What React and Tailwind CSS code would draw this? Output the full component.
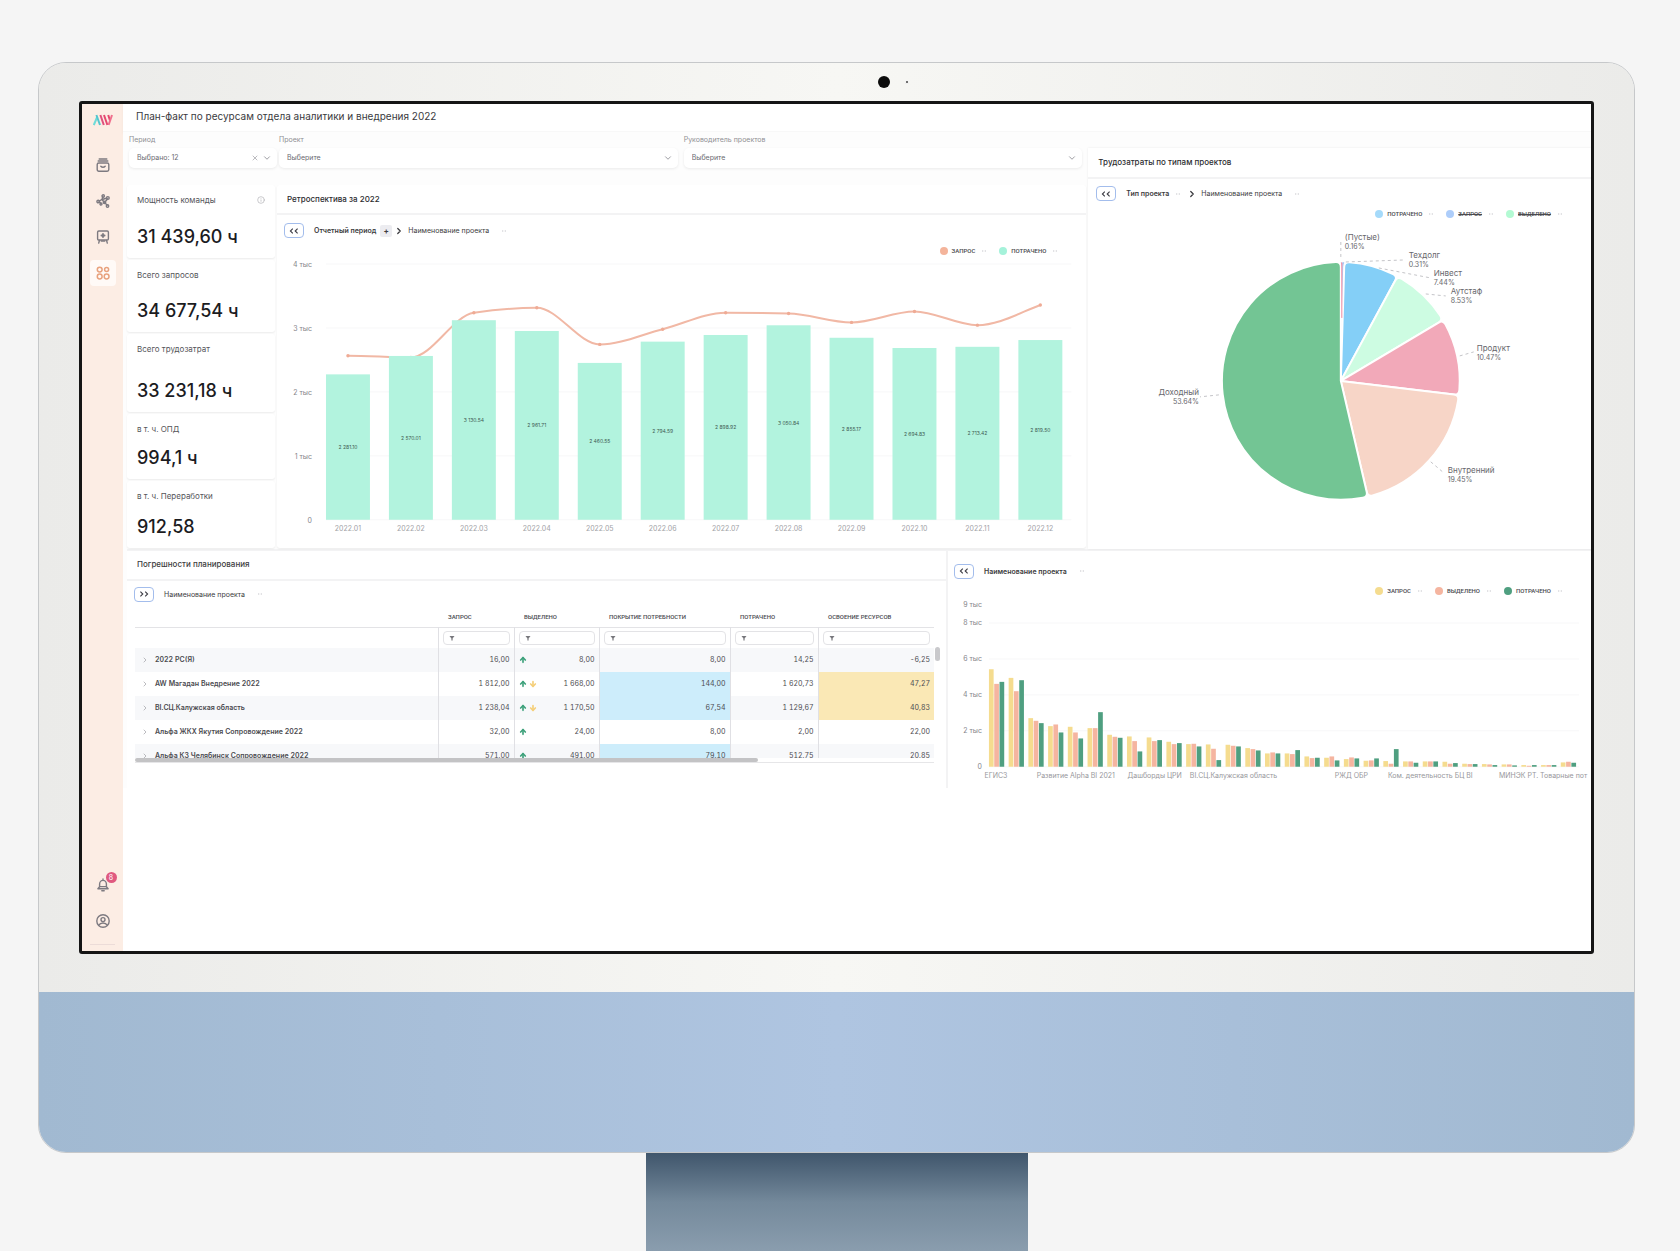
import { ChevronDown, ChevronRight, Info, X, ArrowUp, ArrowDown } from "lucide-react";

const months = [
  { label: "2022.01", spent: 2281.1, request: 2574 },
  { label: "2022.02", spent: 2570.01, request: 2547 },
  { label: "2022.03", spent: 3130.54, request: 3248 },
  { label: "2022.04", spent: 2961.71, request: 3326 },
  { label: "2022.05", spent: 2460.55, request: 2751 },
  { label: "2022.06", spent: 2794.59, request: 2990 },
  { label: "2022.07", spent: 2898.92, request: 3248 },
  { label: "2022.08", spent: 3050.84, request: 3237 },
  { label: "2022.09", spent: 2855.17, request: 3096 },
  { label: "2022.10", spent: 2694.83, request: 3268 },
  { label: "2022.11", spent: 2713.42, request: 3053 },
  { label: "2022.12", spent: 2819.5, request: 3370 },
];

const kpis = [
  { label: "Мощность команды", value: "31 439,60 ч", height: "h-[73px]", info: true },
  { label: "Всего запросов", value: "34 677,54 ч", height: "h-[72px]" },
  { label: "Всего трудозатрат", value: "33 231,18 ч", height: "h-[78px]" },
  { label: "в т. ч. ОПД", value: "994,1 ч", height: "h-[65px]" },
  { label: "в т. ч. Переработки", value: "912,58", height: "h-[67px]" },
];

const slices = [
  { name: "(Пустые)", share: 0.16, color: "#f0899f", x: 257, y: 15, line: "M253 19V37" },
  { name: "Техдолг", share: 0.31, color: "#a9c6f5", x: 321, y: 33, line: "M258 39L316 37" },
  { name: "Инвест", share: 7.44, color: "#84cff7", x: 346, y: 51, line: "M291 45L343 55" },
  { name: "Аутстаф", share: 8.53, color: "#cdfce2", x: 363, y: 69, line: "M338 71L358 73" },
  { name: "Продукт", share: 10.47, color: "#f2a9b9", x: 389, y: 126, line: "M372 133L386 129" },
  { name: "Внутренний", share: 19.45, color: "#f7d5c7", x: 360, y: 248, line: "M343 239L356 250" },
  { name: "Доходный", share: 53.64, color: "#73c594", x: 111, y: 170, line: "M131 172L112 174", end: true },
];

// request, allocated, spent
const projects = [
  [5456, 4637, 4749], [4972, 4227, 4842], [2719, 2570, 2440], [2272, 2365, 1918], [2235, 1918, 1583],
  [2160, 2160, 3054], [1788, 1676, 1620], [1695, 1434, 857], [1639, 1434, 1490], [1397, 1266, 1322],
  [1266, 1285, 1136], [1248, 1006, 372], [1229, 1173, 1136], [1043, 987, 912], [745, 801, 745],
  [745, 708, 931], [577, 484, 503], [503, 577, 354], [428, 521, 466], [335, 354, 466],
  [317, 168, 987], [298, 298, 223], [298, 298, 298], [279, 168, 205], [168, 149, 149],
  [149, 130, 93], [130, 130, 75], [93, 56, 93], [93, 93, 93], [242, 279, 223],
];

const projectColors = ["#f5dc8f", "#f5b5a0", "#4f9f80"];

const projectLabels = [
  { text: "ЕГИСЗ", x: 48 },
  { text: "Развитие Alpha BI 2021", x: 128 },
  { text: "Дашборды ЦРИ", x: 207 },
  { text: "BI.СЦ.Калужская область", x: 286 },
  { text: "РЖД ОБР", x: 404 },
  { text: "Ком. деятельность БЦ BI", x: 483 },
  { text: "МИНЭК РТ. Товарные пот", x: 596 },
];

const columns = ["ЗАПРОС", "ВЫДЕЛЕНО", "ПОКРЫТИЕ ПОТРЕБНОСТИ", "ПОТРАЧЕНО", "ОСВОЕНИЕ РЕСУРСОВ"];

const rows = [
  { name: "2022 РС(Я)", cells: ["16,00", "8,00", "8,00", "14,25", "-6,25"] },
  { name: "AW Магадан Внедрение 2022", cells: ["1 812,00", "1 668,00", "144,00", "1 620,73", "47,27"], down: true, cover: true, usage: true },
  { name: "BI.СЦ.Калужская область", cells: ["1 238,04", "1 170,50", "67,54", "1 129,67", "40,83"], down: true, cover: true, usage: true },
  { name: "Альфа ЖКХ Якутия Сопровождение 2022", cells: ["32,00", "24,00", "8,00", "2,00", "22,00"] },
  { name: "Альфа КЗ Челябинск Сопровождение 2022", cells: ["571,00", "491,00", "79,10", "512,75", "20,85"], cover: true },
];

function formatHours(value) {
  const [whole, fraction] = value.toFixed(2).split(".");
  return `${whole.slice(0, -3)} ${whole.slice(-3)}.${fraction}`;
}

// Monotone cubic curve through the points
function smoothPath(points) {
  const slopes = points.map((p, i) => {
    const prev = points[i - 1];
    const next = points[i + 1];
    if (!prev || !next) return 0;
    const a = (p.y - prev.y) / (p.x - prev.x);
    const b = (next.y - p.y) / (next.x - p.x);
    return a * b <= 0 ? 0 : (2 * a * b) / (a + b);
  });
  slopes[slopes.length - 1] = -0.38;

  return points
    .map((p, i) => {
      if (i === 0) return `M${p.x} ${p.y}`;
      const prev = points[i - 1];
      const dx = (p.x - prev.x) / 3;
      return `C${prev.x + dx} ${prev.y + slopes[i - 1] * dx} ${p.x - dx} ${p.y - slopes[i] * dx} ${p.x} ${p.y}`;
    })
    .join("");
}

// Pie sector with softened outer corners
function slicePath(cx, cy, r, from, to) {
  const at = (angle, radius) => `${cx + radius * Math.sin(angle)} ${cy - radius * Math.cos(angle)}`;
  const corner = Math.min(5, ((to - from) * r) / 3);
  const turn = corner / r;
  const large = to - from > Math.PI ? 1 : 0;
  return [
    `M${cx} ${cy}`,
    `L${at(from, r - corner)}`,
    `Q${at(from, r)} ${at(from + turn, r)}`,
    `A${r} ${r} 0 ${large} 1 ${at(to - turn, r)}`,
    `Q${at(to, r)} ${at(to, r - corner)}`,
    "Z",
  ].join("");
}

function Logo() {
  return (
    <svg viewBox="0 0 20 12" className="h-3 w-5" fill="none" strokeWidth="2">
      <path d="M.8 11L4.4 2.5" stroke="#6fdcd8" />
      <path d="M3.4 1L7 11" stroke="#56c6cf" />
      <path d="M7.4 1L10.8 11" stroke="#e0507c" />
      <path d="M11 1L14.4 11M15.2 1L17 6.5" stroke="#e6486f" />
      <path d="M19 1L15.6 11" stroke="#f0708d" />
    </svg>
  );
}

function ArchiveIcon() {
  return (
    <svg viewBox="0 0 14 14" className="size-3.5" fill="none" stroke="currentColor" strokeWidth="1.4" strokeLinecap="round">
      <path d="M3.2 1h7.6M2.2 3h9.6" />
      <rect x="1.2" y="5" width="11.6" height="8.2" rx="1.6" />
      <path d="M4.8 8.3c1.2 1.3 3.2 1.3 4.4 0" />
    </svg>
  );
}

function NodesIcon() {
  return (
    <svg viewBox="0 0 14 14" className="size-3.5" fill="none" stroke="currentColor" strokeWidth="1.4">
      <path d="M2.5 7.5L6 5.5L11.5 4M6 5.5L7 2M6 5.5L8.5 8.5M3 7.5L5 9.5M8.5 8.5L11.5 11.5M8.5 8.5L12 4.5" />
      <circle cx="2.2" cy="7.5" r="1.3" />
      <circle cx="7.2" cy="2" r="1.2" />
      <circle cx="11.8" cy="4" r="1.4" />
      <circle cx="5" cy="10" r="1" />
      <circle cx="8.5" cy="8.3" r="1.2" />
      <circle cx="11.5" cy="12" r="1.2" />
    </svg>
  );
}

function BoardIcon() {
  return (
    <svg viewBox="0 0 14 14" className="size-3.5" fill="none" stroke="currentColor" strokeWidth="1.4" strokeLinecap="round">
      <rect x="1.6" y="1" width="10.8" height="9" rx="1.2" />
      <path d="M3.4 10.5l-.7 2.6M10.6 10.5l.7 2.6M5.2 11h3.6" />
      <path d="M7 3.9v3.2M5.4 5.5h3.2" strokeWidth="1.8" />
    </svg>
  );
}

function WidgetsIcon() {
  return (
    <svg viewBox="0 0 14 14" className="size-3.5" fill="none" stroke="currentColor" strokeWidth="1.5">
      <circle cx="3.7" cy="3.6" r="2.4" />
      <circle cx="10.6" cy="3.6" r="2" />
      <circle cx="3.7" cy="10.5" r="2.4" />
      <circle cx="10.6" cy="10.5" r="2.4" />
    </svg>
  );
}

function BellIcon() {
  return (
    <svg viewBox="0 0 14 14" className="size-3.5" fill="none" stroke="currentColor" strokeWidth="1.4" strokeLinecap="round" strokeLinejoin="round">
      <path d="M7 1v1.2M3.6 8.8V6a3.4 3.6 0 0 1 6.8 0v2.8l1.7 2H1.9z" />
      <path d="M3.6 8.6h6.8M5.8 12.8h2.4" />
    </svg>
  );
}

function ProfileIcon() {
  return (
    <svg viewBox="0 0 14 14" className="size-3.5" fill="none" stroke="currentColor" strokeWidth="1.4">
      <circle cx="7" cy="7" r="6.2" />
      <circle cx="7" cy="5.6" r="2" />
      <path d="M2.8 11.2c.8-1.4 2.2-2.2 4.2-2.2s3.4.8 4.2 2.2" />
    </svg>
  );
}

function Sidebar() {
  return (
    <nav className="flex w-[41px] shrink-0 flex-col items-center bg-[#fcede4] pt-2.5 pb-1.5 text-[#7d7a80]">
      <Logo />
      <div className="mt-[26px] flex flex-col items-center gap-2.5">
        <button aria-label="Архив" className="flex size-[26px] items-center justify-center"><ArchiveIcon /></button>
        <button aria-label="Модели" className="flex size-[26px] items-center justify-center"><NodesIcon /></button>
        <button aria-label="Доски" className="flex size-[26px] items-center justify-center"><BoardIcon /></button>
        <button aria-label="Виджеты" className="flex size-[26px] items-center justify-center rounded-[4px] bg-[#fffaf7] text-[#e8a27e]"><WidgetsIcon /></button>
      </div>
      <button aria-label="Уведомления" className="relative mt-auto">
        <BellIcon />
        <span className="absolute -top-1.5 left-2.5 flex size-[11px] items-center justify-center rounded-full bg-[#e0597f] text-[7px] leading-none text-white">8</span>
      </button>
      <button aria-label="Профиль" className="mt-[22px]"><ProfileIcon /></button>
      <div className="mt-4 h-px w-[25px] bg-[#ecdcd8]" />
    </nav>
  );
}

function Filter({ id, label, value, className, clearable }) {
  return (
    <div className={className}>
      <label htmlFor={id} className="block h-4 text-[7px] leading-4 text-[#8f8f93]">{label}</label>
      <div className="relative">
        <select id={id} className="block h-5 w-full appearance-none rounded-[5px] bg-white pl-2 text-[7px] text-[#6a6a70] shadow-[0_1px_3px_rgba(0,0,0,0.08)]">
          <option>{value}</option>
        </select>
        {clearable && (
          <button aria-label="Очистить" className="absolute top-1.5 right-[18px]"><X className="size-2 text-[#9a9aa0]" /></button>
        )}
        <ChevronDown className="pointer-events-none absolute top-[5px] right-[5px] size-2.5 text-[#8a8a90]" />
      </div>
    </div>
  );
}

function ToggleButton({ forward }) {
  return (
    <button aria-label={forward ? "Развернуть" : "Свернуть"} className="flex h-[15px] w-5 items-center justify-center rounded-[4px] border border-[#a3bdec] bg-white text-[#3c3c44]">
      <svg viewBox="0 0 10 6" className={forward ? "h-1.5 w-2.5 rotate-180" : "h-1.5 w-2.5"} fill="none" stroke="currentColor" strokeWidth="1.1">
        <path d="M3.8 .6L1.4 3l2.4 2.4M8.6 .6L6.2 3l2.4 2.4" />
      </svg>
    </button>
  );
}

function Dots() {
  return (
    <svg viewBox="0 0 6 2" className="h-0.5 w-1.5" fill="#c6c6cb">
      <rect x="1" y="0.5" width="1.3" height="1" />
      <rect x="3.7" y="0.5" width="1.3" height="1" />
    </svg>
  );
}

function Legend({ items }) {
  return (
    <ul className="flex h-[15px] items-center justify-end gap-3 pr-7 font-['Roboto','Noto_Sans',sans-serif] text-[6px] leading-none font-medium text-[#4a4a4e]">
      {items.map((item) => (
        <li key={item.name} className="flex items-center gap-1">
          <svg viewBox="0 0 8 8" className="size-2"><circle cx="4" cy="4" r="4" fill={item.color} /></svg>
          <span className={item.off ? "mr-0.5 line-through" : "mr-0.5"}>{item.name}</span>
          <Dots />
        </li>
      ))}
    </ul>
  );
}

function RetroChart() {
  const zero = 262;
  const scale = 0.0638;
  const points = months.map((m, i) => ({ x: 71 + i * 63, y: zero - m.request * scale }));

  return (
    <svg viewBox="0 0 810 290" className="block w-full" role="img" aria-label="Ретроспектива за 2022">
      {[0, 1, 2, 3, 4].map((tick) => (
        <g key={tick}>
          <path d={`M49 ${zero - tick * 64}H795`} stroke="#f7f7f8" />
          <text x="35" y={zero - tick * 64 + 3} fontSize="7" textAnchor="end" fill="#85858a">
            {tick ? `${tick} тыс` : "0"}
          </text>
        </g>
      ))}
      <path d={smoothPath(points)} fill="none" stroke="#f1b8a5" strokeWidth="2" />
      {points.map((p) => (
        <circle key={p.x} cx={p.x} cy={p.y} r="1.7" fill="#efab95" />
      ))}
      {months.map((m, i) => (
        <g key={m.label} textAnchor="middle">
          <rect x={49 + i * 63} y={zero - m.spent * scale} width="44" height={m.spent * scale} fill="#b2f3de" />
          <text x={71 + i * 63} y={zero - (m.spent * scale) / 2 + 2} fontSize="5" fill="#3d5a52">{formatHours(m.spent)}</text>
          <text x={71 + i * 63} y="273" fontSize="7" fill="#a2a2a6">{m.label}</text>
        </g>
      ))}
    </svg>
  );
}

function PieChart() {
  const total = slices.reduce((sum, s) => sum + s.share, 0);
  let angle = 0;
  const arcs = slices.map((s) => {
    const from = angle;
    angle += (s.share / total) * Math.PI * 2;
    return { ...s, from, to: angle };
  });

  return (
    <svg viewBox="0 0 503 326" className="block w-full" role="img" aria-label="Трудозатраты по типам проектов">
      {arcs.map((s) => (
        <path key={s.name} d={slicePath(253, 158, 119, s.from, s.to)} fill={s.color} stroke="#fff" strokeWidth={s.share < 1 ? 0.3 : 2} />
      ))}
      {/* the empty group is thinner than its border, so it gets its own stroke */}
      <path d="M254 40V95" stroke="#f0899f" />
      {arcs.map((s) => (
        <g key={s.name} textAnchor={s.end ? "end" : "start"} fill="#67676c">
          <path d={s.line} stroke="#c4c4c8" strokeDasharray="3 3" fill="none" />
          <text x={s.x} y={s.y + 2} fontSize="8">{s.name}</text>
          <text x={s.x} y={s.y + 11} fontSize="7">{s.share}%</text>
        </g>
      ))}
    </svg>
  );
}

function ProjectsChart() {
  const zero = 168;
  const scale = 0.0179;

  return (
    <svg viewBox="0 0 644 190" className="block w-full" role="img" aria-label="Наименование проекта">
      {[0, 2, 4, 6, 8, 9].map((tick) => (
        <g key={tick}>
          <path d={`M41 ${zero - tick * 18}H632`} stroke={tick === 9 ? "none" : "#f7f7f8"} />
          <text x="34" y={zero - tick * 18 + 2} fontSize="7" textAnchor="end" fill="#85858a">
            {tick ? `${tick} тыс` : "0"}
          </text>
        </g>
      ))}
      {projects.map((values, i) =>
        values.map((value, k) => (
          <rect key={`${i}-${k}`} x={41 + i * 19.75 + k * 5.3} y={zero - value * scale} width="4.7" height={value * scale} fill={projectColors[k]} />
        ))
      )}
      {projectLabels.map((label) => (
        <text key={label.text} x={label.x} y="179" fontSize="7" textAnchor="middle" fill="#97979c">{label.text}</text>
      ))}
    </svg>
  );
}

function PlanningTable() {
  return (
    <div className="relative mt-1 mr-3 ml-2">
      <div className="h-[152px] overflow-hidden">
        <table className="w-full table-fixed border-collapse text-[7px] leading-none text-[#4b4b50]">
          <colgroup>
            <col className="w-[303px]" />
            <col className="w-[76px]" />
            <col className="w-[85px]" />
            <col className="w-[131px]" />
            <col className="w-[88px]" />
            <col className="w-[116px]" />
          </colgroup>
          <thead>
            <tr className="h-[22px] border-b border-[#e3e3e6]">
              <th aria-label="Проект" />
              {columns.map((name) => (
                <th key={name} scope="col" className="pl-2.5 text-left font-['Roboto','Noto_Sans',sans-serif] text-[6px] font-medium whitespace-nowrap">{name}</th>
              ))}
            </tr>
            <tr className="h-5">
              <td />
              {columns.map((name) => (
                <td key={name} className="border-l border-[#e0e0e4] px-1 py-0">
                  <div className="relative">
                    <input aria-label={`Фильтр: ${name}`} className="block h-3.5 w-full rounded-[4px] border border-[#e3e3e6] bg-white pl-4" />
                    <svg viewBox="0 0 6 6" className="pointer-events-none absolute top-1 left-1.5 size-1.5" fill="#77777c"><path d="M.5 1h5L3.6 3.4V5.5H2.4V3.4z" /></svg>
                  </div>
                </td>
              ))}
            </tr>
          </thead>
          <tbody className="tabular-nums">
            {rows.map((row, i) => (
              <tr key={row.name} className={i % 2 ? "h-6 bg-white" : "h-6 bg-[#f7f8fa]"}>
                <th scope="row" className="p-0 text-left font-semibold whitespace-nowrap">
                  <span className="flex items-center gap-1.5 pl-1.5">
                    <ChevronRight className="size-2 text-[#9a9aa0]" />
                    {row.name}
                  </span>
                </th>
                {row.cells.map((cell, k) => (
                  <td
                    key={k}
                    className={
                      k === 2 && row.cover
                        ? "border-l border-[#e0e0e4] bg-[#cdedfb] px-1 text-right"
                        : k === 4 && row.usage
                          ? "border-l border-[#e0e0e4] bg-[#fae8b5] px-1 text-right"
                          : "border-l border-[#e0e0e4] px-1 text-right"
                    }
                  >
                    {k === 1 ? (
                      <span className="flex items-center">
                        <ArrowUp className="size-2 text-[#3fa27c]" strokeWidth={5} />
                        {row.down && <ArrowDown className="ml-0.5 size-2 text-[#f5cf7a]" strokeWidth={5} />}
                        <span className="ml-auto">{cell}</span>
                      </span>
                    ) : (
                      cell
                    )}
                  </td>
                ))}
              </tr>
            ))}
          </tbody>
        </table>
      </div>
      <div className="h-[5px] border-b border-[#e6e6e8]">
        <div className="h-1 w-[78%] rounded-full bg-[#c3c3c5]" />
      </div>
      <div className="absolute top-[41px] -right-1.5 h-3.5 w-[5px] rounded-full bg-[#c9c9cc]" />
    </div>
  );
}

function Dashboard() {
  return (
    <main className="min-w-0 flex-1 bg-white">
      <h1 className="h-7 border-b border-[#f8f8f8] pl-[13px] text-[10px] leading-6 text-[#3a3a3e] shadow-[0_2px_3px_rgba(0,0,0,0.04)]">
        План-факт по ресурсам отдела аналитики и внедрения 2022
      </h1>

      <div className="bg-[#fdfdfd] pl-1">
        <div className="grid grid-cols-[960fr_503fr] gap-0.5">
          <div className="flex flex-col">
            <div className="flex pr-1 pl-0.5">
              <Filter id="period" label="Период" value="Выбрано: 12" className="mr-0.5 w-[148px]" clearable />
              <Filter id="project" label="Проект" value="Выберите" className="mr-1.5 flex-1" />
              <Filter id="manager" label="Руководитель проектов" value="Выберите" className="flex-1" />
            </div>

            <div className="mt-[17px] flex gap-0.5">
              <div className="flex w-[148px] flex-col gap-0.5">
                {kpis.map((kpi) => (
                  <section key={kpi.label} className={`${kpi.height} flex flex-col justify-between rounded-[3px] bg-white px-2.5 pt-[11px] pb-3 shadow-[0_1px_2px_rgba(0,0,0,0.07)]`}>
                    <h2 className="flex justify-between text-[8px] leading-none text-[#55555a]">
                      {kpi.label}
                      {kpi.info && <Info className="size-2 text-[#b0b0b5]" />}
                    </h2>
                    <p className="text-[18px] leading-none font-medium whitespace-nowrap text-[#1c1c1f]">{kpi.value}</p>
                  </section>
                ))}
              </div>

              <section className="min-w-0 flex-1 rounded-[3px] bg-white shadow-[0_1px_2px_rgba(0,0,0,0.07)]">
                <h2 className="h-[30px] border-b-2 border-[#f3f3f4] pl-2.5 text-[8px] leading-7 font-medium text-[#2c2c30]">Ретроспектива за 2022</h2>
                <div className="mt-2 flex items-center pl-[7px] text-[7px] leading-none text-[#3c3c40]">
                  <ToggleButton />
                  <span className="ml-2.5 font-semibold">Отчетный период</span>
                  <span className="mr-0.5 ml-1 flex size-3 items-center justify-center rounded-[2px] bg-[#ececf0] text-[8px] font-bold">+</span>
                  <ChevronRight className="size-2.5" strokeWidth={3} />
                  <span className="mr-3 ml-1">Наименование проекта</span>
                  <Dots />
                </div>
                <div className="mt-[5px]">
                  <Legend items={[{ name: "ЗАПРОС", color: "#f4b49b" }, { name: "ПОТРАЧЕНО", color: "#a5f2da" }]} />
                </div>
                <RetroChart />
              </section>
            </div>
          </div>

          <section className="mt-4 bg-white shadow-[0_0_2px_rgba(0,0,0,0.08)]">
            <h2 className="h-[31px] border-b-2 border-[#f3f3f4] pl-2.5 text-[8px] leading-[29px] font-medium text-[#2c2c30]">Трудозатраты по типам проектов</h2>
            <div className="mt-[7px] flex items-center pl-2 text-[7px] leading-none text-[#3c3c40]">
              <ToggleButton />
              <span className="mr-1.5 ml-2.5 font-semibold">Тип проекта</span>
              <Dots />
              <ChevronRight className="ml-1.5 size-2.5" strokeWidth={3} />
              <span className="mr-3 ml-1">Наименование проекта</span>
              <Dots />
            </div>
            <div className="mt-[5px] mb-0.5">
              <Legend
                items={[
                  { name: "ПОТРАЧЕНО", color: "#a5dafa" },
                  { name: "ЗАПРОС", color: "#adcdfa", off: true },
                  { name: "ВЫДЕЛЕНО", color: "#b3fad3", off: true },
                ]}
              />
            </div>
            <PieChart />
          </section>
        </div>

        <div className="grid grid-cols-[819fr_644fr] gap-0.5 bg-[#f3f3f4] pt-0.5">
          <section className="bg-white">
            <h2 className="h-[30px] border-b-2 border-[#f3f3f4] pl-2.5 text-[8px] leading-[26px] font-medium text-[#3c3c40]">Погрешности планирования</h2>
            <div className="mt-1.5 flex items-center pl-[7px] text-[7px] leading-none text-[#3c3c40]">
              <ToggleButton forward />
              <span className="mr-3 ml-2.5">Наименование проекта</span>
              <Dots />
            </div>
            <PlanningTable />
          </section>

          <section className="bg-white pt-[13px]">
            <div className="flex items-center pl-1.5 text-[7px] leading-none text-[#3c3c40]">
              <ToggleButton />
              <span className="mr-3 ml-2.5 font-semibold">Наименование проекта</span>
              <Dots />
            </div>
            <div className="mt-[5px]">
              <Legend
                items={[
                  { name: "ЗАПРОС", color: "#f5dc8f" },
                  { name: "ВЫДЕЛЕНО", color: "#f5b5a0" },
                  { name: "ПОТРАЧЕНО", color: "#4f9f80" },
                ]}
              />
            </div>
            <ProjectsChart />
          </section>
        </div>
      </div>
    </main>
  );
}

export default function App() {
  return (
    <div className="flex min-h-screen flex-col bg-[#f5f5f5] pt-[62px] pr-[45px] pl-[38px] font-['Inter','Noto_Sans',sans-serif]">
      <div className="flex flex-1 flex-col overflow-hidden rounded-[28px] border border-[#c6c8ca]">
        <div className="flex flex-1 flex-col bg-linear-to-r from-[#ebebe9] via-[#f7f7f4] to-[#ebebe9] px-10 pb-[38px]">
          <div className="flex h-[38px] items-center justify-center gap-[15px] pl-[114px]">
            <span className="size-3 rounded-full bg-[#0c0c0c]" />
            <span className="size-1 rounded-full border border-white bg-[#333]" />
          </div>
          <div className="flex flex-1 overflow-hidden rounded-[3px] border-3 border-[#151515]">
            <Sidebar />
            <Dashboard />
          </div>
        </div>
        <div className="h-40 bg-linear-to-r from-[#a1b9d1] via-[#afc5e1] to-[#a1b9d1]" />
      </div>
      <div className="mx-auto h-[98px] w-[382px] bg-linear-to-b from-[#40566c] via-[#74899b] to-[#8a9dae]" />
    </div>
  );
}
